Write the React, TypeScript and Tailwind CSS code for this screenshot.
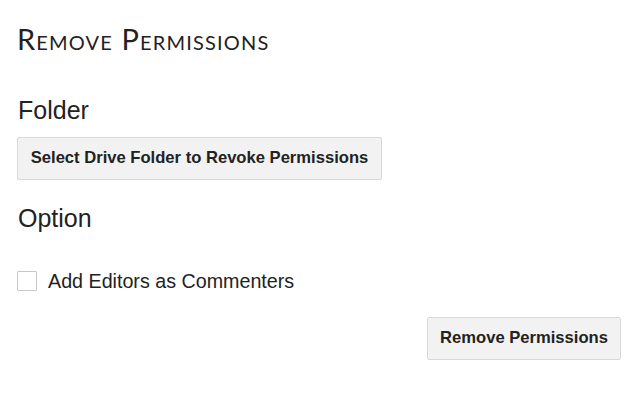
export default function App() {
  return (
    <div className="h-[400px] w-[640px] bg-white text-[#222] [font-family:'Liberation_Sans',Arial,sans-serif]">
      <div className="flex flex-col px-[17px] pt-[22px]">
        <h1 className="text-[29px] leading-[34px] tracking-[0.04em] [font-family:Lato,'Open_Sans',sans-serif] [font-variant:small-caps]">
          Remove Permissions
        </h1>

        <h2 className="ml-[1px] mt-[40px] text-[25px] leading-[28px]">Folder</h2>
        <div className="mt-[13px]">
          <button
            type="button"
            className="h-[43px] w-[365px] rounded-[2px] border border-[#d9d9d9] bg-[#f2f2f2] text-[16.6px] font-bold text-[#222]"
          >
            Select Drive Folder to Revoke Permissions
          </button>
        </div>

        <h2 className="ml-[1px] mt-[24px] text-[25px] leading-[28px]">Option</h2>

        <label className="mt-[38px] flex items-center gap-[11px]">
          <span className="h-[20px] w-[20px] rounded-[1px] border border-[#c8c8c8] bg-white" />
          <span className="text-[19.7px] leading-[22px]">Add Editors as Commenters</span>
        </label>

        <div className="mt-[25px] flex justify-end pr-[2px]">
          <button
            type="button"
            className="h-[43px] w-[194px] rounded-[2px] border border-[#d9d9d9] bg-[#f2f2f2] text-[16.6px] font-bold text-[#222]"
          >
            Remove Permissions
          </button>
        </div>
      </div>
    </div>
  );
}
